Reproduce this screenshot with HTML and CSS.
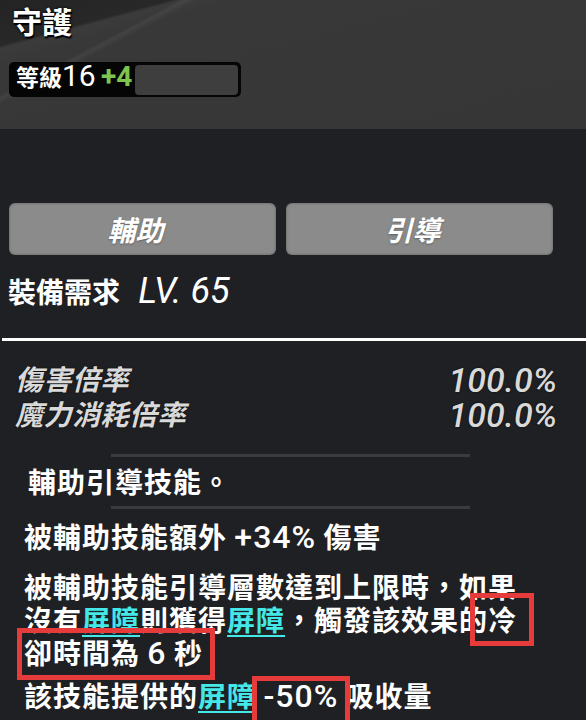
FILE: index.html
```html
<!DOCTYPE html>
<html lang="zh-Hant">
<head>
    <meta charset="UTF-8">
    <meta name="viewport" content="width=device-width, initial-scale=1.0">
    <title>守護</title>
    <link rel="stylesheet" href="styles.css">
</head>
<body>
    <!-- Skill header -->
    <div class="header">
        <div class="title">守護</div>
        <div class="level">
            <span class="level-text">等級<span class="level-num">16</span> <span class="level-plus">+4</span></span>
            <div class="level-fill"></div>
        </div>
    </div>

    <!-- Tags -->
    <div class="tabs">
        <div class="tab">輔助</div>
        <div class="tab">引導</div>
    </div>

    <div class="require">裝備需求 <span class="require-lv">LV. 65</span></div>
    <div class="rule"></div>

    <!-- Stats -->
    <div class="stats">
        <div class="stat"><span>傷害倍率</span><span class="stat-value">100.0%</span></div>
        <div class="stat"><span>魔力消耗倍率</span><span class="stat-value">100.0%</span></div>
    </div>

    <div class="sep"></div>
    <p class="type">輔助引導技能。</p>
    <div class="sep"></div>

    <!-- Effects -->
    <div class="effects">
        <p class="effect">被輔助技能額外 <span class="latin">+34%</span> 傷害</p>
        <p class="effect effect-long">被輔助技能引導層數達到上限時，如果<br>沒有<span class="kw">屏障</span>則獲得<span class="kw">屏障</span>，觸發該效果的冷<br>卻時間為 <span class="latin">6</span> 秒</p>
        <p class="effect effect-last">該技能提供的<span class="kw">屏障</span> <span class="latin">-50%</span> 吸收量</p>

        <div class="mark mark-1"></div>
        <div class="mark mark-2"></div>
        <div class="mark mark-3"></div>
    </div>
</body>
</html>
```

FILE: styles.css
```css
:root {
    --bg-color: #1f2023;
    --header-color: #363636;
    --tab-color: #8b8b8b;
    --stat-color: #d9d9d9;
    --sep-color: #3a3b40;
    --keyword-color: #44e8e8;
    --plus-color: #7dc54e;
    --mark-color: #e63b3b;
}

html {
    background-color: var(--bg-color);
}

body {
    margin: 0;
    width: 586px;
    min-height: 720px;
    overflow: hidden;
    background-color: var(--bg-color);
    color: #fff;
    font-family: "Noto Sans CJK TC", "Noto Sans CJK SC", sans-serif;
    font-weight: 700;
}

.header {
    height: 129px;
    box-sizing: border-box;
    padding: 3px 0 0 12px;
    background:
        linear-gradient(152deg, transparent 84px, rgba(255, 255, 255, 0.05) 87px, transparent 93px),
        linear-gradient(165deg, #242424 0, #282828 44px, #3b3b3b 47px, #383838 62px, var(--header-color) 100%);
}

.title {
    font-size: 30px;
    line-height: 34px;
    text-shadow: 0 0 3px #000, 1px 2px 1px #000;
}

.level {
    display: flex;
    align-items: center;
    width: 232px;
    height: 35px;
    box-sizing: border-box;
    margin: 25px 0 0 -3px;
    padding: 0 3px 0 7px;
    background-color: #050505;
    border-radius: 5px;
}

.level-text {
    font-size: 23px;
    line-height: 24px;
    margin-bottom: 8px;
    white-space: nowrap;
}

.level-num,
.level-plus {
    font-family: Roboto, "Liberation Sans", sans-serif;
    font-size: 30px;
    font-weight: 400;
    line-height: 0;
}

.level-plus {
    font-size: 28px;
    font-weight: 700;
    color: var(--plus-color);
}

.level-fill {
    flex: 1;
    height: 30px;
    margin-left: 3px;
    background-color: #3e3e3e;
    border-radius: 4px;
}

.tabs {
    display: flex;
    gap: 10px;
    margin-top: 74px;
    padding-left: 9px;
}

.tab {
    width: 267px;
    height: 52px;
    box-sizing: border-box;
    padding-right: 14px;
    line-height: 52px;
    text-align: center;
    font-size: 28px;
    font-style: italic;
    background-color: var(--tab-color);
    border-radius: 6px;
    box-shadow: inset 0 0 3px rgba(0, 0, 0, 0.35);
    text-shadow: 0 1px 2px rgba(0, 0, 0, 0.3);
}

.require {
    height: 34px;
    margin-top: 19px;
    padding-left: 8px;
    font-size: 28px;
    line-height: 34px;
    white-space: nowrap;
}

.require-lv {
    margin-left: 12px;
    font-family: Roboto, "Liberation Sans", sans-serif;
    font-size: 36px;
    font-style: italic;
    font-weight: 400;
    line-height: 0;
}

.rule {
    height: 3px;
    margin: 30px 0 0 2px;
    background-color: #fff;
}

.stats {
    margin-top: 20px;
    padding: 0 29px 0 15px;
}

.stat {
    display: flex;
    justify-content: space-between;
    height: 35px;
    line-height: 35px;
    font-size: 28px;
    font-style: italic;
    letter-spacing: 0.5px;
    color: var(--stat-color);
    text-shadow: 0 0 2px rgba(0, 0, 0, 0.8);
}

.stat-value {
    font-family: Roboto, "Liberation Sans", sans-serif;
    font-size: 34px;
    font-weight: 500;
    letter-spacing: 0;
    line-height: 0;
    align-self: center;
    padding-top: 2px;
}

.sep {
    width: 359px;
    height: 3px;
    margin: 23px 0 0 111px;
    background-color: var(--sep-color);
}

.type {
    margin: 8px 0 0;
    padding-left: 28px;
    font-size: 28px;
    line-height: 33px;
    letter-spacing: 1px;
}

.type + .sep {
    margin-top: 8px;
}

.effects {
    position: relative;
    margin-top: 11px;
    padding-left: 24px;
}

.effect {
    margin: 0;
    font-size: 28px;
    line-height: 33px;
    letter-spacing: 1px;
    white-space: nowrap;
}

.effect-long {
    margin-top: 17px;
}

.effect-last {
    margin-top: 10px;
}

.latin {
    font-family: Roboto, "Liberation Sans", sans-serif;
    font-size: 32px;
    font-weight: 500;
    line-height: 0;
}

.kw {
    color: var(--keyword-color);
    text-decoration: underline;
    text-decoration-thickness: 2px;
    text-underline-offset: 4px;
}

/* red annotation boxes drawn over the text */
.mark {
    position: absolute;
    box-sizing: border-box;
    border: 5px solid var(--mark-color);
}

.mark-1 {
    left: 470px;
    top: 73px;
    width: 64px;
    height: 53px;
}

.mark-2 {
    left: 17px;
    top: 108px;
    width: 198px;
    height: 52px;
}

.mark-3 {
    left: 252px;
    top: 156px;
    width: 98px;
    height: 50px;
}
```
